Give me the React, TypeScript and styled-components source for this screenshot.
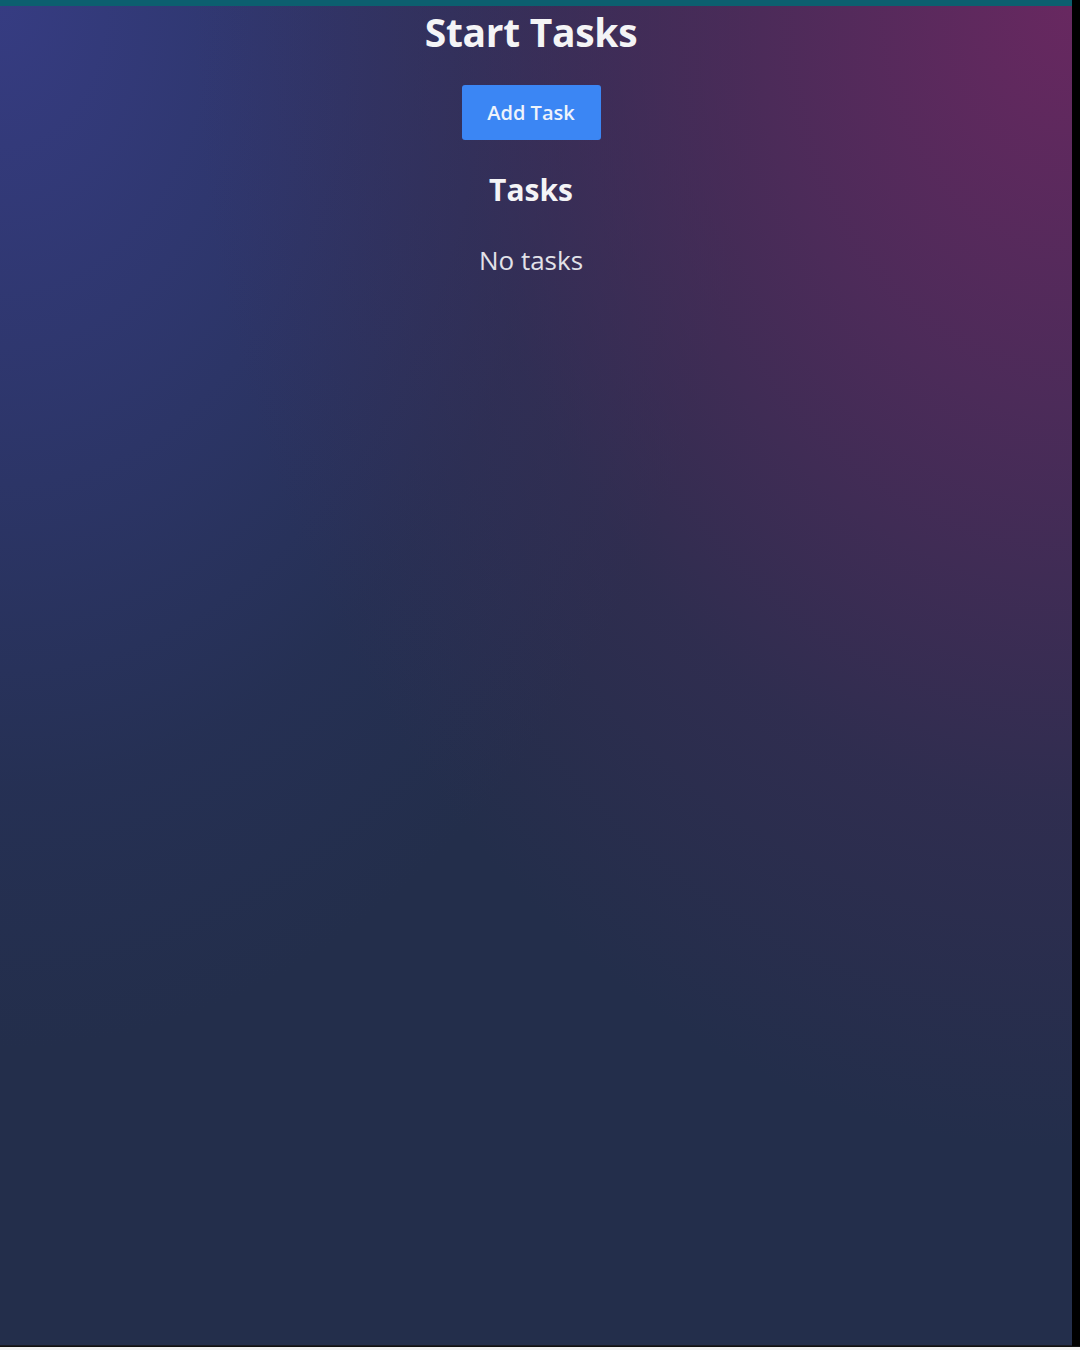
import React, { ReactElement } from 'react';
import styled, { createGlobalStyle } from 'styled-components';

const GlobalStyle = createGlobalStyle`
  html, body {
    margin: 0;
    padding: 0;
    background: #f2f2f2;
  }
  body {
    font-family: 'Open Sans', 'Noto Sans', sans-serif;
  }
`;

const Screen = styled.div`
  display: flex;
  width: 1080px;
  height: 1346px;
  background: #000;
  border-bottom: 1px solid #111;
`;

const Frame = styled.div`
  display: flex;
  flex-direction: column;
  width: 1072px;
  height: 1345px;
  background:
    radial-gradient(ellipse 880px 1150px at 100% 0%, rgba(104, 40, 96, 1) 0%, rgba(90, 42, 94, 0.75) 35%, rgba(70, 44, 88, 0.35) 70%, rgba(60, 44, 84, 0) 100%),
    radial-gradient(ellipse 760px 1050px at 0% 0%, rgba(54, 60, 130, 1) 0%, rgba(48, 56, 115, 0.8) 40%, rgba(42, 52, 100, 0.35) 75%, rgba(42, 52, 100, 0) 100%),
    #232e4b;
  border-bottom: 1px solid #1a1a22;
`;

const TopBar = styled.div`
  height: 6px;
  flex: 0 0 6px;
  background: #0c5f6f;
`;

const Content = styled.main`
  display: flex;
  flex-direction: column;
  align-items: center;
  padding-right: 10px;
  color: #fff;
`;

const Title = styled.h1`
  margin: 0;
  font-size: 39px;
  font-weight: 700;
  line-height: 52px;
  letter-spacing: -0.3px;
  color: #f4f4f6;
`;

const AddButton = styled.button`
  margin-top: 27px;
  width: 139px;
  height: 55px;
  border: none;
  border-radius: 3px;
  background: #3b86f4;
  color: #eef3fb;
  font-family: inherit;
  font-size: 20px;
  font-weight: 600;
  cursor: pointer;
`;

const SectionTitle = styled.h2`
  margin: 28px 0 0;
  font-size: 30px;
  font-weight: 700;
  line-height: 44px;
  color: #f4f4f6;
`;

const Empty = styled.p`
  margin: 31px 0 0;
  font-size: 26px;
  line-height: 34px;
  color: #e2e2e8;
`;

function App(): ReactElement {
  return (
    <>
      <GlobalStyle />
      <Screen>
        <Frame>
          <TopBar />
          <Content>
            <Title>Start Tasks</Title>
            <AddButton type="button">Add Task</AddButton>
            <SectionTitle>Tasks</SectionTitle>
            <Empty>No tasks</Empty>
          </Content>
        </Frame>
      </Screen>
    </>
  );
}

export default App;
